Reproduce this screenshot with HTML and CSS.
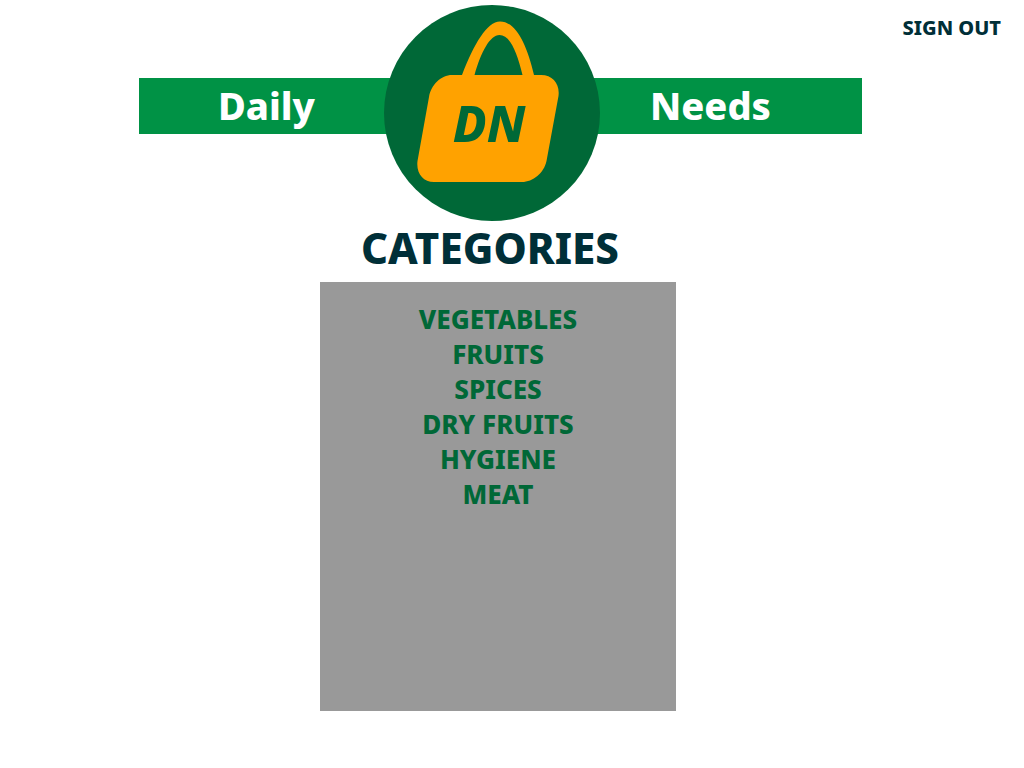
FILE: index.html
```html
<!DOCTYPE html>
<html lang="en">
<head>
<meta charset="utf-8">
<meta name="viewport" content="width=device-width, initial-scale=1">
<title>Daily Needs - Categories</title>
<link rel="stylesheet" href="styles.css">
</head>
<body>
<header class="header">
  <div class="brand">
    <div class="brand-bar"></div>
    <span class="brand-word brand-daily">Daily</span>
    <svg class="brand-logo" viewBox="0 0 216 216" role="img" aria-label="DN shopping bag">
      <circle cx="108" cy="108" r="108" fill="#006837"/>
      <path d="M78 70C90 39 103 16.500 116 16.500C132 16.500 143 40 150 70H138.500C133 47 126 30 115.500 30C106 30 97 47 90.500 70Z" fill="#ffa200"/>
      <path d="M68 70H157C169 70 176 79 174.500 91L162.500 156C160 168 149 177 138 177H50C39 177 32 168 33.500 156L45 92C47 80 57 70 68 70Z" fill="#ffa200"/>
      <text class="logo-text" x="105" y="137" text-anchor="middle">DN</text>
    </svg>
    <span class="brand-word brand-needs">Needs</span>
  </div>
  <a class="sign-out" href="#">SIGN OUT</a>
</header>
<main class="main">
  <h1 class="title">CATEGORIES</h1>
  <nav class="panel" aria-label="Categories">
    <ul class="category-list">
      <li><a class="category" href="#">VEGETABLES</a></li>
      <li><a class="category" href="#">FRUITS</a></li>
      <li><a class="category" href="#">SPICES</a></li>
      <li><a class="category" href="#">DRY FRUITS</a></li>
      <li><a class="category" href="#">HYGIENE</a></li>
      <li><a class="category" href="#">MEAT</a></li>
    </ul>
  </nav>
</main>
</body>
</html>
```
FILE: styles.css
```css
* {
  box-sizing: border-box;
}

body {
  margin: 0;
  background: #fff;
  color: #002f38;
  font-family: "Noto Sans", sans-serif;
  font-weight: 800;
}

a {
  color: inherit;
  text-decoration: none;
}

.header {
  display: grid;
  grid-template-columns: 139fr 723fr 162fr;
  padding-top: 5px;
}

.brand {
  grid-column: 2;
  display: grid;
  grid-template-columns: 245fr 216px 262fr;
  align-items: center;
}

.brand-bar {
  grid-area: 1 / 1 / 2 / 4;
  height: 56px;
  background: #009245;
  margin-bottom: 14px;
}

.brand-word {
  grid-row: 1;
  color: #fff;
  font-size: 38px;
  line-height: 56px;
  padding-bottom: 16px;
}

.brand-daily {
  grid-column: 1;
  padding-left: 79px;
}

.brand-needs {
  grid-column: 3;
  padding-left: 50px;
}

.brand-logo {
  grid-area: 1 / 2;
  display: block;
  width: 216px;
  height: 216px;
}

.logo-text {
  fill: #006837;
  font-size: 50px;
  font-style: italic;
}

.sign-out {
  grid-column: 3;
  grid-row: 1;
  justify-self: end;
  align-self: start;
  padding: 8px 23px 0 0;
  font-size: 20px;
  line-height: 30px;
  white-space: nowrap;
}

.main {
  display: flex;
  flex-direction: column;
  align-items: center;
  padding: 0 28px 57px 0;
}

.title {
  margin: 0;
  padding-right: 16px;
  font-size: 42px;
  font-weight: 800;
  line-height: 54px;
}

.panel {
  width: 356px;
  max-width: 100%;
  min-height: 429px;
  margin-top: 7px;
  padding-top: 20px;
  background: #999;
}

.category-list {
  margin: 0;
  padding: 0;
  list-style: none;
  text-align: center;
}

.category {
  display: block;
  color: #006837;
  font-size: 26px;
  line-height: 35px;
}
```
